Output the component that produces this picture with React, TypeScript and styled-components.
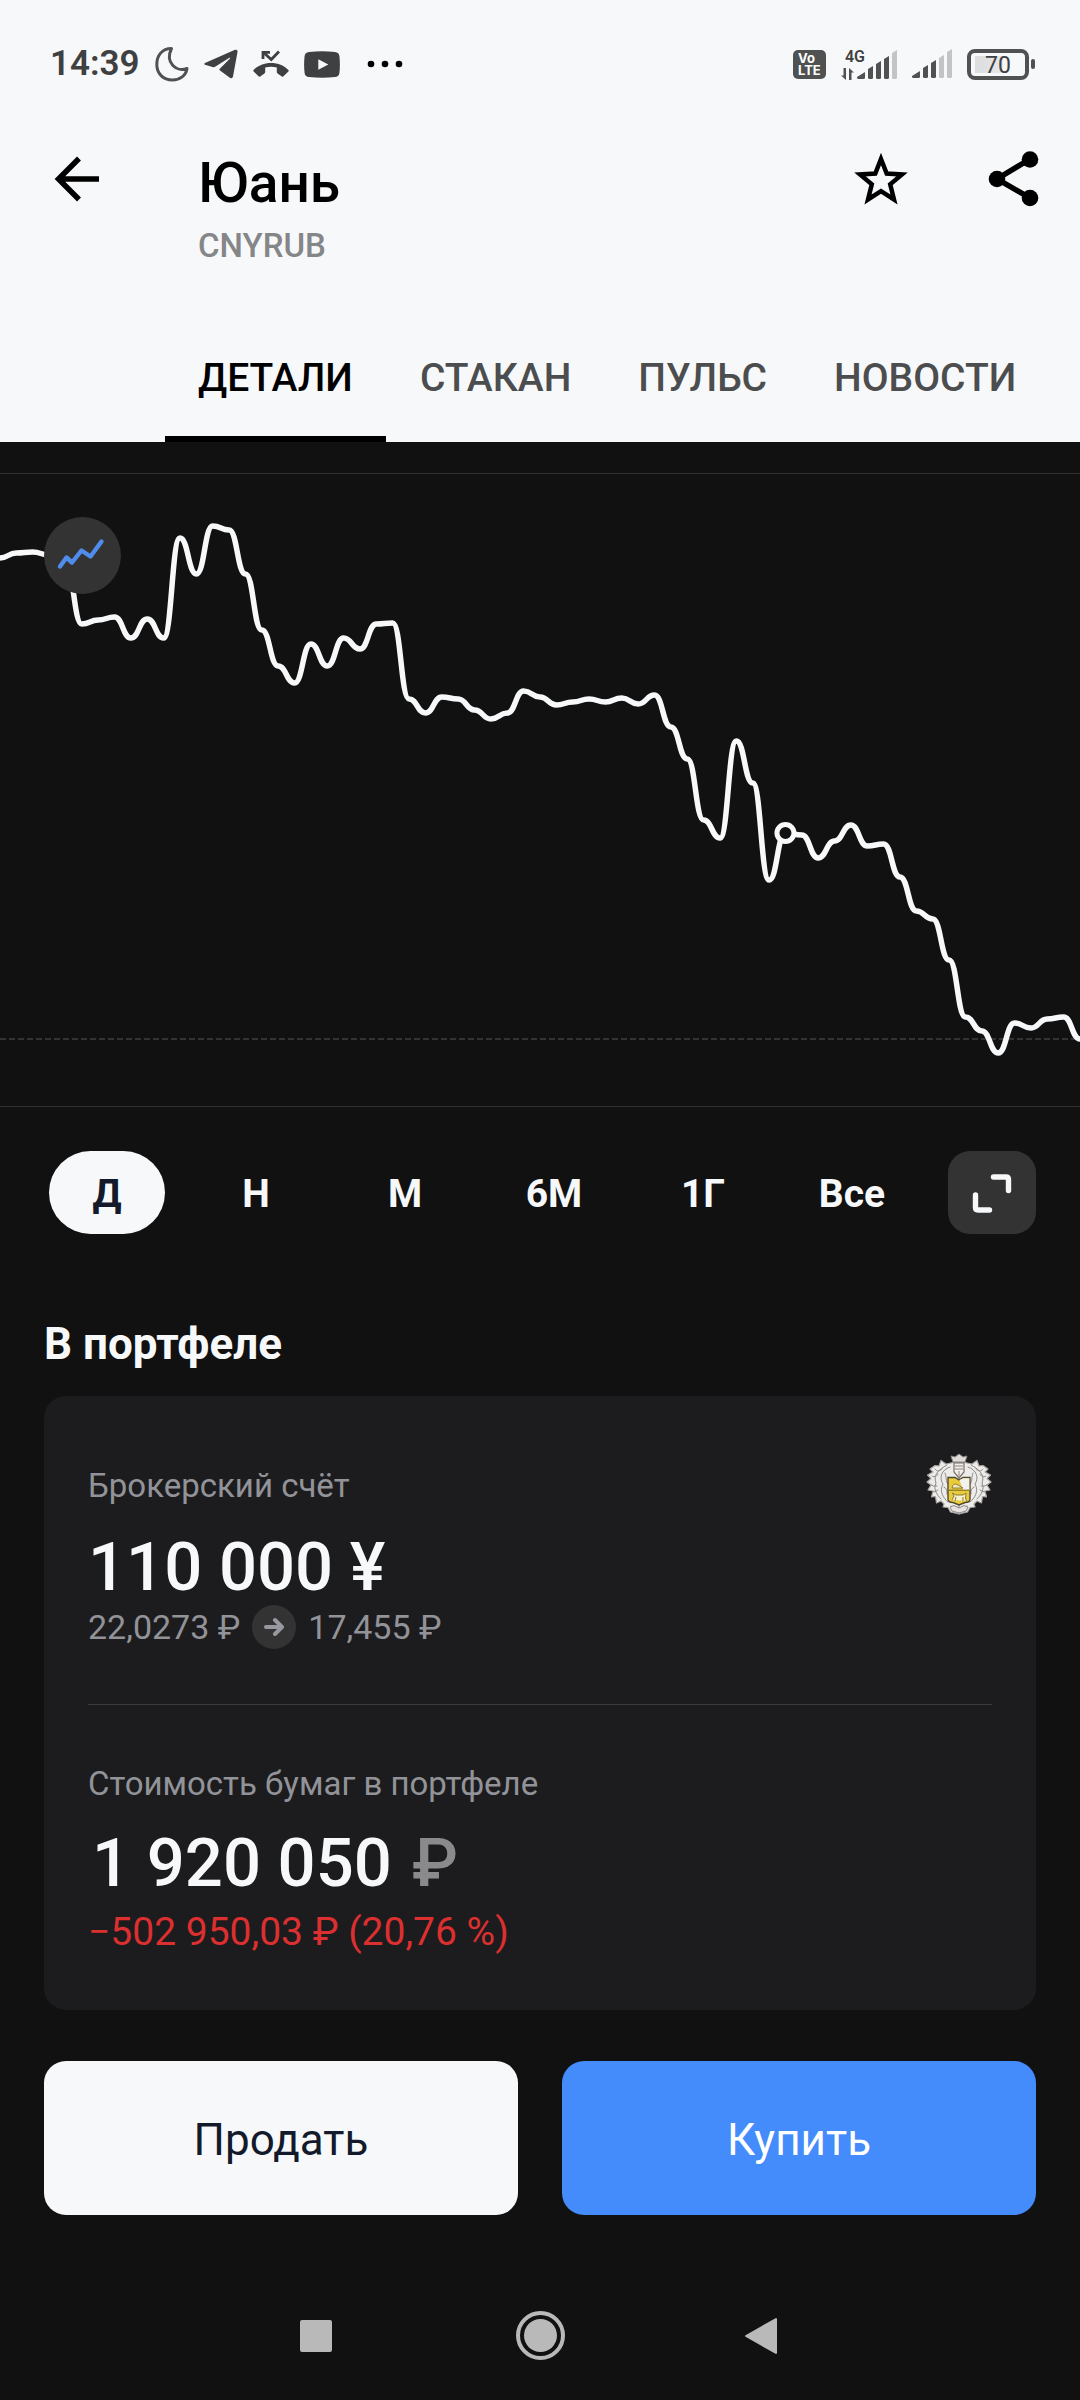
import React, { useState } from "react";
import styled, { createGlobalStyle } from "styled-components";

const GlobalStyle = createGlobalStyle`
  *, *::before, *::after { box-sizing: border-box; }
  body {
    margin: 0;
    background: #111111;
    color: #f7f8fa;
    font-family: Roboto, "Noto Sans", sans-serif;
  }
  button {
    margin: 0;
    padding: 0;
    border: 0;
    background: none;
    color: inherit;
    font: inherit;
    cursor: pointer;
  }
  svg { display: block; flex: none; }
`;

const Screen = styled.div`
  display: flex;
  flex-direction: column;
`;

const Header = styled.header`
  background: #f7f8fa;
  color: #000000;
`;

const StatusBar = styled.div`
  display: flex;
  align-items: center;
  justify-content: space-between;
  padding: 44px 45px 0 50px;
  color: #3f4041;
`;

const StatusGroup = styled.div<{ $gap: number }>`
  display: flex;
  align-items: center;
  gap: ${(p) => p.$gap}px;
  height: 40px;
`;

const Clock = styled.time`
  font-size: 35px;
  line-height: 40px;
  font-weight: 600;
`;

const VolteBadge = styled.span`
  display: flex;
  flex-direction: column;
  align-items: flex-start;
  justify-content: center;
  width: 33px;
  height: 29px;
  padding-left: 5px;
  border-radius: 5px;
  background: #505252;
  color: #ffffff;
  font-family: Inter, sans-serif;
  font-size: 13px;
  line-height: 12px;
  font-weight: 700;
`;

const Mobile = styled.span`
  display: flex;
  align-items: flex-end;
  gap: 4px;
`;

const NetworkColumn = styled.span`
  display: flex;
  flex-direction: column;
  align-items: flex-end;
  width: 24px;
  margin-right: -12px;
  font-size: 16px;
  line-height: 16px;
  font-weight: 600;
`;

const ArrowsIcon = styled.svg`
  align-self: flex-start;
  margin-top: 3px;
`;

const Battery = styled.span`
  display: flex;
  align-items: center;
  gap: 2px;
`;

const BatteryBody = styled.span`
  display: flex;
  align-items: center;
  justify-content: center;
  width: 62px;
  height: 31px;
  padding-top: 2px;
  border: 4px solid #505252;
  border-radius: 8px;
  font-size: 23px;
  line-height: 23px;
  background: linear-gradient(90deg, #dcdddf, #e6e7e9) 4px center / 28px 17px no-repeat;
`;

const BatteryTip = styled.span`
  width: 4px;
  height: 10px;
  border-radius: 2px;
  background: #505252;
`;

const Toolbar = styled.div`
  display: grid;
  grid-template-columns: 154px 1fr auto;
  align-items: start;
  padding: 67px 39px 41px 44px;
`;

const Title = styled.h1`
  margin: 0 0 11px;
  font-size: 55px;
  line-height: 64px;
  font-weight: 500;
`;

const Ticker = styled.p`
  margin: 0;
  font-size: 33px;
  line-height: 40px;
  font-weight: 500;
  color: #858688;
`;

const ToolbarActions = styled.div`
  display: flex;
  gap: 76px;
`;

const IconButton = styled.button`
  display: flex;
  align-items: center;
  justify-content: flex-start;
  height: 56px;
`;

const Tabs = styled.nav`
  display: flex;
  gap: 1px;
  padding-left: 165px;
`;

const Tab = styled.button<{ $active: boolean }>`
  padding: 48px 33px 35px;
  border-bottom: 6px solid ${(p) => (p.$active ? "#000000" : "transparent")};
  color: ${(p) => (p.$active ? "#000000" : "#4c4d4f")};
  font-size: 39px;
  line-height: 46px;
  font-weight: 500;
`;

const ChartPanel = styled.section`
  position: relative;
  margin-top: 31px;
  border-top: 1px solid #303030;
  border-bottom: 1px solid #303030;
`;

const ChartSvg = styled.svg`
  width: 100%;
  height: auto;
`;

const ChartTypeButton = styled.button`
  position: absolute;
  top: 43px;
  left: 44px;
  width: 77px;
  height: 77px;
  border-radius: 50%;
  background: #333333;
`;

const RangeRow = styled.div`
  display: flex;
  gap: 38px;
  padding: 44px 44px 0 49px;
`;

const Ranges = styled.div`
  display: grid;
  grid-template-columns: repeat(6, 1fr);
  gap: 33px;
  flex: 1;
`;

const RangeButton = styled.button<{ $active: boolean }>`
  height: 83px;
  padding-top: 3px;
  border-radius: 42px;
  background: ${(p) => (p.$active ? "#f7f8fa" : "transparent")};
  color: ${(p) => (p.$active ? "#121a2b" : "#f7f8fa")};
  font-size: 39px;
  line-height: 46px;
  font-weight: 700;
`;

const ExpandButton = styled.button`
  display: flex;
  align-items: center;
  justify-content: center;
  width: 88px;
  height: 83px;
  border-radius: 22px;
  background: #333333;
`;

const Portfolio = styled.section`
  padding: 84px 44px 0;
`;

const SectionTitle = styled.h2`
  margin: 0 0 26px;
  font-size: 44px;
  line-height: 52px;
  font-weight: 700;
`;

const Card = styled.div`
  padding: 57px 44px 55px;
  border-radius: 22px;
  background: #1c1c1e;
`;

const CardHead = styled.div`
  display: flex;
  align-items: center;
  justify-content: space-between;
  margin-bottom: 10px;
`;

const Label = styled.p`
  margin: 0;
  font-size: 33px;
  line-height: 40px;
  color: #929398;
`;

const Price = styled(Label)`
  font-size: 34px;
`;

const Amount = styled.p`
  margin: 0;
  font-size: 67px;
  line-height: 76px;
  font-weight: 500;
`;

const TotalAmount = styled(Amount)`
  display: flex;
  gap: 20px;
  margin: 21px 0 8px;
  padding-left: 4px;
`;

const Currency = styled.span`
  color: #8a8a8c;
`;

const PriceRow = styled.div`
  display: flex;
  align-items: center;
  gap: 12px;
  height: 44px;
`;

const PriceArrow = styled.span`
  display: flex;
  align-items: center;
  justify-content: center;
  width: 44px;
  height: 44px;
  border-radius: 50%;
  background: #333333;
`;

const Divider = styled.hr`
  height: 1px;
  margin: 55px 0 59px;
  border: 0;
  background: #3a3a3b;
`;

const Change = styled.p`
  margin: 0;
  font-size: 39px;
  line-height: 46px;
  color: #dc2f2f;
`;

const TradeRow = styled.div`
  display: grid;
  grid-template-columns: 1fr 1fr;
  gap: 44px;
  padding: 51px 44px 0;
`;

const TradeButton = styled.button<{ $primary?: boolean }>`
  height: 154px;
  padding-top: 3px;
  border-radius: 22px;
  background: ${(p) => (p.$primary ? "#448cfb" : "#f7f8fa")};
  color: ${(p) => (p.$primary ? "#ffffff" : "#121a2b")};
  font-size: 44px;
  line-height: 52px;
`;

const SystemNav = styled.nav`
  display: flex;
  justify-content: center;
  gap: 175px;
  padding: 96px 0 40px;
`;

const SystemButton = styled.button`
  display: flex;
  align-items: center;
  justify-content: center;
  width: 49px;
  height: 49px;
`;

const PRICES = [
  84, 79, 78, 81, 90, 150, 146, 143, 164, 145, 164, 64, 100, 52, 56, 100, 156, 192, 209, 170,
  192, 164, 175, 150, 149, 225, 239, 223, 225, 236, 245, 239, 217, 223, 231, 228, 225, 228, 224,
  230, 221, 253, 285, 346, 364, 267, 309, 406, 359, 361, 384, 367, 351, 372, 370, 403, 437, 445,
  486, 543, 557, 579, 549, 554, 545, 543, 565,
];
const CHART_WIDTH = 1080;
const CHART_HEIGHT = 632;
const DEAL_INDEX = 48;
const STEP = CHART_WIDTH / (PRICES.length - 1);

const linePath = PRICES.map((y, i) => {
  const x = i * STEP;
  if (i === 0) return `M${x} ${y}`;
  const mid = x - STEP / 2;
  return `C${mid} ${PRICES[i - 1]} ${mid} ${y} ${x} ${y}`;
}).join(" ");

function PriceChart() {
  return (
    <ChartSvg viewBox={`0 0 ${CHART_WIDTH} ${CHART_HEIGHT}`} role="img" aria-label="График CNYRUB">
      <line x1="0" x2={CHART_WIDTH} y1="565" y2="565" stroke="#333333" strokeWidth="2" strokeDasharray="6 3" />
      <path d={linePath} fill="none" stroke="#f7f8f9" strokeWidth="5.500" strokeLinejoin="round" />
      <circle cx={DEAL_INDEX * STEP} cy={PRICES[DEAL_INDEX]} r="8.5" fill="#111111" stroke="#f7f8f9" strokeWidth="5" />
    </ChartSvg>
  );
}

function SignalBars({ level }: { level: number }) {
  const tops = [22, 16, 11, 6, 0];
  return (
    <svg width="40" height="30" viewBox="0 0 40 30">
      {tops.map((top, i) => {
        const left = i === 0 ? 0 : 3 + i * 8;
        const right = i === 0 ? 8 : left + 5;
        return (
          <path
            key={top}
            d={`M${left} ${top + (i === 0 ? 5 : 3)} L${right} ${top} V27.5 Q${right} 29 ${right - 1.5} 29 H${left + 1.5} Q${left} 29 ${left} 27.5 Z`}
            fill={i < level ? "#505252" : "#c3c4c5"}
          />
        );
      })}
    </svg>
  );
}

function MoonIcon() {
  return (
    <svg width="34" height="36" viewBox="0 0 34 36">
      <path
        d="M16.500 2.500 C7 2.500 1.800 9.500 1.800 18.500 C1.800 27.500 8 34 17.500 34 C25 34 31 29.500 32 22.500 C22 26.500 9.500 17 16.500 2.500 Z"
        fill="none"
        stroke="#505252"
        strokeWidth="3"
        strokeLinejoin="round"
      />
    </svg>
  );
}

function TelegramIcon() {
  return (
    <svg width="34" height="30" viewBox="0 0 34 30">
      <path
        d="M1 14 L31 0.800 Q33.800 0 33.500 3 L29 27.500 Q28.400 30.300 25.800 28.800 L16 21.600 Q14.800 20.600 16 19.400 L26 9.400 Q26.600 8.400 25.400 8.800 L11.500 17.600 Q10 18.400 8.500 18 L1 15.800 Q-0.500 15 1 14 Z"
        fill="currentColor"
      />
    </svg>
  );
}

function MissedCallIcon() {
  return (
    <svg width="36" height="28" viewBox="0 0 36 28">
      <path d="M10 9 V2.300 H17" fill="none" stroke="currentColor" strokeWidth="2.800" />
      <path d="M10.500 2.500 L18.300 9.500 L26 1.500" fill="none" stroke="currentColor" strokeWidth="2.800" />
      <path
        d="M18 13 C11 13 5 15.500 0.600 20 Q0 20.700 0.600 21.400 L5.500 26.300 Q6.300 27 7.200 26.400 L11.400 23.400 Q12.200 22.800 12.200 21.800 V17.600 Q18 16 23.800 17.600 V21.800 Q23.800 22.800 24.600 23.400 L28.800 26.400 Q29.700 27 30.500 26.300 L35.400 21.400 Q36 20.700 35.400 20 C31 15.500 25 13 18 13 Z"
        fill="currentColor"
      />
    </svg>
  );
}

function YoutubeIcon() {
  return (
    <svg width="36" height="27" viewBox="0 0 36 27">
      <path
        d="M5 0.900 Q18 -0.300 31 0.900 Q35 1.300 35.400 5 Q36.400 13.500 35.400 22 Q35 25.700 31 26.100 Q18 27.300 5 26.100 Q1 25.700 0.600 22 Q-0.400 13.500 0.600 5 Q1 1.300 5 0.900 Z"
        fill="currentColor"
      />
      <path d="M14.300 8.200 L24.300 13.500 L14.300 18.800 Z" fill="#f7f8fa" />
    </svg>
  );
}

function CrestHalf() {
  return (
    <g>
      <path
        d="M33 9 L27 9.500 L20 11 L15 7.500 L13 13 L9 12.500 L4 16 L7 19 L1.500 22 L5 25.500 L1 29 L5 32 L2 37 L7 38 L5.500 44 L9.500 43.500 L10.500 50 L15 48 L18 51 L17 54 L22 54.500 L24.500 59 L33 61 Z"
        fill="#eeecea"
        stroke="#a9a5a2"
        strokeWidth="1.200"
        strokeLinejoin="round"
      />
      <path
        d="M24 14 C15 17 13 25 17 31 C13 38 17 45 22 49 M21 12 C12 17 7 22 10 30 C7 36 11 42 15 46 M9 16 C11 19 14 18 16 16 M6 23 C9 25 11 23 12 21 M5 32 Q8 34 11 33 M7 39 Q10 39 12 37 M19 20 C21 24 19 28 22 31 M18 34 Q22 36 21 41 M25 53 Q29 57 33 57"
        fill="none"
        stroke="#8e8986"
        strokeWidth="1"
        strokeLinecap="round"
      />
    </g>
  );
}

function BankCrest() {
  return (
    <svg width="66" height="66" viewBox="0 0 66 66" role="img" aria-label="Тинькофф">
      <CrestHalf />
      <g transform="matrix(-1 0 0 1 66 0)">
        <CrestHalf />
      </g>
      <path d="M25 3 L29 4 L33 1 L37 4 L41 3 L39 9 H27 Z" fill="#dedbd8" stroke="#8e8986" strokeWidth="1" />
      <path d="M28 10 H38 V19 L33 25 L28 19 Z" fill="#f3efeb" stroke="#77716d" strokeWidth="1.200" />
      <path d="M29 13 H37 M29 16 H37 M33 18 V23" stroke="#8f827a" strokeWidth="1" />
      <path d="M22 24.500 H29 L33 27 L37 24.500 H44 V46 Q44 49.500 39 49.500 L33 52 L27 49.500 Q22 49.500 22 46 Z" fill="#e9cb3c" stroke="#504a32" strokeWidth="1.400" />
      <path d="M33.500 27 L37.500 25.300 H43.300 V37 H37 Z" fill="#f4f2ee" />
      <path d="M23 37.200 H43" stroke="#756724" strokeWidth="1" />
      <path d="M26 35 Q27 29 32 32 L37 35 Z" fill="#f2eaba" stroke="#78692a" strokeWidth="0.800" />
      <path d="M26 47 L28 43 L26.500 40 L30 42 H37 L40 40 L39.500 45 L40.500 48 M30 44 L29 48 M37 44 L37 48" fill="#f6f0d0" stroke="#8b7a31" strokeWidth="1" />
      <path d="M24 54 L28 52.500 L33 55 L38 52.500 L42 54 L40 58 L33 60 L26 58 Z" fill="#e6e3e0" stroke="#8e8986" strokeWidth="1" />
    </svg>
  );
}

const TABS = ["ДЕТАЛИ", "СТАКАН", "ПУЛЬС", "НОВОСТИ"];
const RANGES = ["Д", "Н", "М", "6М", "1Г", "Все"];

export default function App() {
  const [tab, setTab] = useState(TABS[0]);
  const [range, setRange] = useState(RANGES[0]);

  return (
    <Screen>
      <GlobalStyle />
      <Header>
        <StatusBar>
          <StatusGroup $gap={15}>
            <Clock>14:39</Clock>
            <MoonIcon />
            <TelegramIcon />
            <MissedCallIcon />
            <YoutubeIcon />
            <svg width="62" height="8" viewBox="0 0 62 8">
              <g fill="#000000">
                <circle cx="16" cy="4" r="3.300" />
                <circle cx="30" cy="4" r="3.300" />
                <circle cx="44" cy="4" r="3.300" />
              </g>
            </svg>
          </StatusGroup>
          <StatusGroup $gap={15}>
            <VolteBadge>
              <span>Vo</span>
              <span>LTE</span>
            </VolteBadge>
            <Mobile>
              <NetworkColumn>
                4G
                <ArrowsIcon width="13" height="12" viewBox="0 0 13 12">
                  <path d="M5 0 V12 L0 7.500 H2.500 V0 Z M8 12 V0 L13 4.500 H10.500 V12 Z" fill="#505252" />
                </ArrowsIcon>
              </NetworkColumn>
              <SignalBars level={4} />
            </Mobile>
            <SignalBars level={3} />
            <Battery>
              <BatteryBody>70</BatteryBody>
              <BatteryTip />
            </Battery>
          </StatusGroup>
        </StatusBar>

        <Toolbar>
          <IconButton aria-label="Назад">
            <svg width="66" height="56" viewBox="0 0 66 56">
              <path d="M55 28 H15 M35 7.500 L14.500 28 L35 48.500" fill="none" stroke="#000000" strokeWidth="5.500" />
            </svg>
          </IconButton>
          <div>
            <Title>Юань</Title>
            <Ticker>CNYRUB</Ticker>
          </div>
          <ToolbarActions>
            <IconButton aria-label="В избранное">
              <svg width="56" height="56" viewBox="0 0 56 56">
                <path
                  d="M28 8 L33.700 22.500 L49 23.500 L37.200 33.300 L41 48.500 L28 40.200 L15 48.500 L18.800 33.300 L7 23.500 L22.300 22.500 Z"
                  fill="none"
                  stroke="#000000"
                  strokeWidth="4.500"
                />
              </svg>
            </IconButton>
            <IconButton aria-label="Поделиться">
              <svg width="56" height="56" viewBox="0 0 56 56">
                <path d="M45 8 L12 28 L45 47" fill="none" stroke="#000000" strokeWidth="5.500" />
                <circle cx="45" cy="8.500" r="8.300" />
                <circle cx="12" cy="28" r="8.300" />
                <circle cx="45" cy="47" r="8.300" />
              </svg>
            </IconButton>
          </ToolbarActions>
        </Toolbar>

        <Tabs>
          {TABS.map((name) => (
            <Tab key={name} $active={name === tab} onClick={() => setTab(name)}>
              {name}
            </Tab>
          ))}
        </Tabs>
      </Header>

      <main>
        <ChartPanel>
          <PriceChart />
          <ChartTypeButton aria-label="Тип графика">
            <svg width="77" height="77" viewBox="0 0 77 77">
              <path
                d="M16 49.500 L22.500 40.500 L28 45.500 L37.500 33.500 L46.500 39.500 L57.500 24.500"
                fill="none"
                stroke="#4f8ceb"
                strokeWidth="4.400"
                strokeLinecap="round"
                strokeLinejoin="round"
              />
            </svg>
          </ChartTypeButton>
        </ChartPanel>

        <RangeRow>
          <Ranges>
            {RANGES.map((name) => (
              <RangeButton key={name} $active={name === range} onClick={() => setRange(name)}>
                {name}
              </RangeButton>
            ))}
          </Ranges>
          <ExpandButton aria-label="На весь экран">
            <svg width="40" height="40" viewBox="0 0 40 40">
              <path
                d="M21.500 4 H34 Q36.500 4 36.500 6.500 V17.500 M3.500 22 V34.500 Q3.500 37 6 37 H17.500"
                fill="none"
                stroke="#f7f8f9"
                strokeWidth="5.400"
                strokeLinecap="round"
              />
            </svg>
          </ExpandButton>
        </RangeRow>

        <Portfolio>
          <SectionTitle>В портфеле</SectionTitle>
          <Card>
            <CardHead>
              <Label>Брокерский счёт</Label>
              <BankCrest />
            </CardHead>
            <Amount>110 000 ¥</Amount>
            <PriceRow>
              <Price>22,0273 ₽</Price>
              <PriceArrow>
                <svg width="20" height="20" viewBox="0 0 20 20">
                  <path
                    d="M2 10 H17 M11 3 L18 10 L11 17"
                    fill="none"
                    stroke="#98999e"
                    strokeWidth="4"
                    strokeLinecap="round"
                    strokeLinejoin="round"
                  />
                </svg>
              </PriceArrow>
              <Price>17,455 ₽</Price>
            </PriceRow>
            <Divider />
            <Label>Стоимость бумаг в портфеле</Label>
            <TotalAmount>
              <span>1 920 050</span>
              <Currency>₽</Currency>
            </TotalAmount>
            <Change>−502 950,03 ₽ (20,76 %)</Change>
          </Card>
        </Portfolio>

        <TradeRow>
          <TradeButton>Продать</TradeButton>
          <TradeButton $primary>Купить</TradeButton>
        </TradeRow>
      </main>

      <SystemNav aria-label="Системная навигация">
        <SystemButton aria-label="Недавние">
          <svg width="32" height="32" viewBox="0 0 32 32">
            <rect width="32" height="32" rx="2" fill="#b9b9b9" />
          </svg>
        </SystemButton>
        <SystemButton aria-label="Домой">
          <svg width="49" height="49" viewBox="0 0 49 49">
            <circle cx="24.500" cy="24.500" r="22.500" fill="none" stroke="#b9b9b9" strokeWidth="4" />
            <circle cx="24.500" cy="24.500" r="16.500" fill="#b9b9b9" />
          </svg>
        </SystemButton>
        <SystemButton aria-label="Назад в системе">
          <svg width="38" height="38" viewBox="0 0 38 38">
            <path d="M31 2 V36 L1 19 Z" fill="#b9b9b9" stroke="#b9b9b9" strokeWidth="2" strokeLinejoin="round" />
          </svg>
        </SystemButton>
      </SystemNav>
    </Screen>
  );
}
